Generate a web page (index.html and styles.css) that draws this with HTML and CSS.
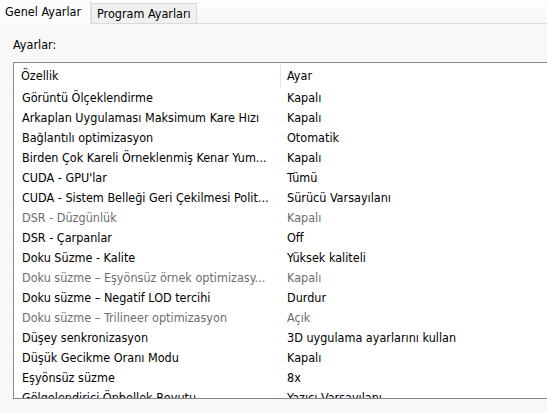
FILE: index.html
```html
<!DOCTYPE html>
<html lang="tr">
<head>
<meta charset="utf-8">
<link rel="stylesheet" href="styles.css">
</head>
<body>
<div class="tabs">
  <div class="tab active">Genel Ayarlar</div>
  <div class="tab">Program Ayarları</div>
</div>
<div class="panel">
  <div class="label">Ayarlar:</div>
  <div class="listbox">
    <div class="header">
      <div class="hcell">Özellik</div>
      <div class="hcell">Ayar</div>
    </div>
    <div class="rows">
      <div class="row"><span>Görüntü Ölçeklendirme</span><span>Kapalı</span></div>
      <div class="row"><span>Arkaplan Uygulaması Maksimum Kare Hızı</span><span>Kapalı</span></div>
      <div class="row"><span>Bağlantılı optimizasyon</span><span>Otomatik</span></div>
      <div class="row"><span>Birden Çok Kareli Örneklenmiş Kenar Yum...</span><span>Kapalı</span></div>
      <div class="row"><span>CUDA - GPU'lar</span><span>Tümü</span></div>
      <div class="row"><span>CUDA - Sistem Belleği Geri Çekilmesi Polit...</span><span>Sürücü Varsayılanı</span></div>
      <div class="row dim"><span>DSR - Düzgünlük</span><span>Kapalı</span></div>
      <div class="row"><span>DSR - Çarpanlar</span><span>Off</span></div>
      <div class="row"><span>Doku Süzme - Kalite</span><span>Yüksek kaliteli</span></div>
      <div class="row dim"><span>Doku süzme – Eşyönsüz örnek optimizasy...</span><span>Kapalı</span></div>
      <div class="row"><span>Doku süzme – Negatif LOD tercihi</span><span>Durdur</span></div>
      <div class="row dim"><span>Doku süzme – Trilineer optimizasyon</span><span>Açık</span></div>
      <div class="row"><span>Düşey senkronizasyon</span><span>3D uygulama ayarlarını kullan</span></div>
      <div class="row"><span>Düşük Gecikme Oranı Modu</span><span>Kapalı</span></div>
      <div class="row"><span>Eşyönsüz süzme</span><span>8x</span></div>
      <div class="row"><span>Gölgelendirici Önbellek Boyutu</span><span>Yazıcı Varsayılanı</span></div>
    </div>
  </div>
</div>
</body>
</html>
```

FILE: styles.css
```css
html, body {
  margin: 0;
  padding: 0;
  width: 547px;
  height: 413px;
  overflow: hidden;
  background: #f8f8f8;
  font-family: "DejaVu Sans Condensed", "DejaVu Sans", sans-serif;
  font-size: 12.5px;
  color: #000;
}

.tabs {
  display: flex;
  align-items: flex-end;
  height: 23px;
  background: linear-gradient(#ffffff, #f6f6f6);
  border-bottom: 1px solid #dadada;
}

.tab {
  height: 20px;
  line-height: 20px;
  background: #f0f0f0;
  border: 1px solid #d9d9d9;
  border-bottom: none;
  box-sizing: border-box;
  width: 106px;
  padding-left: 5px;
  white-space: nowrap;
}

.tab.active {
  height: 24px;
  margin-bottom: -1px;
  width: 91px;
  line-height: 24px;
  background: #fcfcfc;
  border: none;
  border-right: 1px solid #e3e3e3;
  padding-left: 5px;
}

.panel {
  padding: 13px 0 0 13px;
}

.label {
  height: 16px;
  line-height: 16px;
  margin-bottom: 9px;
}

.listbox {
  width: 560px;
  height: 337px;
  background: #fff;
  border: 1px solid #828790;
  box-sizing: border-box;
  overflow: hidden;
}

.header {
  display: grid;
  grid-template-columns: 266px 1fr;
  height: 25px;
}

.hcell {
  line-height: 25px;
  padding-left: 7px;
}

.hcell + .hcell {
  border-left: 1px solid #e5e5e5;
  margin-top: 1px;
  line-height: 23px;
  padding-left: 6px;
}

.row {
  display: grid;
  grid-template-columns: 266px 1fr;
  height: 20px;
  line-height: 20px;
}

.row span {
  padding-left: 8px;
  white-space: nowrap;
  overflow: hidden;
}

.row span + span {
  padding-left: 7px;
}

.row.dim {
  color: #6d6d6d;
}
```
